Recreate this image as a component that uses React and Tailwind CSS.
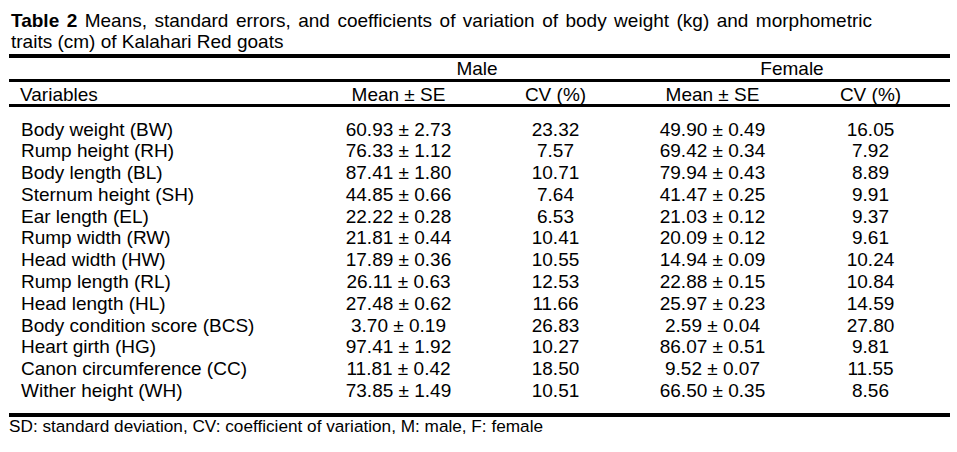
const rows = [
	["Body weight (BW)", "60.93 ± 2.73", "23.32", "49.90 ± 0.49", "16.05"],
	["Rump height (RH)", "76.33 ± 1.12", "7.57", "69.42 ± 0.34", "7.92"],
	["Body length (BL)", "87.41 ± 1.80", "10.71", "79.94 ± 0.43", "8.89"],
	["Sternum height (SH)", "44.85 ± 0.66", "7.64", "41.47 ± 0.25", "9.91"],
	["Ear length (EL)", "22.22 ± 0.28", "6.53", "21.03 ± 0.12", "9.37"],
	["Rump width (RW)", "21.81 ± 0.44", "10.41", "20.09 ± 0.12", "9.61"],
	["Head width (HW)", "17.89 ± 0.36", "10.55", "14.94 ± 0.09", "10.24"],
	["Rump length (RL)", "26.11 ± 0.63", "12.53", "22.88 ± 0.15", "10.84"],
	["Head length (HL)", "27.48 ± 0.62", "11.66", "25.97 ± 0.23", "14.59"],
	["Body condition score (BCS)", "3.70 ± 0.19", "26.83", "2.59 ± 0.04", "27.80"],
	["Heart girth (HG)", "97.41 ± 1.92", "10.27", "86.07 ± 0.51", "9.81"],
	["Canon circumference (CC)", "11.81 ± 0.42", "18.50", "9.52 ± 0.07", "11.55"],
	["Wither height (WH)", "73.85 ± 1.49", "10.51", "66.50 ± 0.35", "8.56"],
];

const cols = "grid grid-cols-[311px_157px_157px_157px_159px]";

export default function App() {
	return (
		<div className="w-[957px] h-[452px] bg-white text-black font-['Liberation_Sans',Arial,sans-serif]">
			<div className="pl-[9px] pt-[10px] w-[950px]">
				{/* caption, justified like the journal's */}
				<p className="ml-[2px] w-[861px] text-justify text-[19px] leading-[21px]">
					<b>Table 2</b> Means, standard errors, and coefficients of variation of body weight (kg) and morphometric traits (cm) of Kalahari Red goats
				</p>

				<div className="mt-[2px] border-t-4 border-black text-[19px]">
					<div className={`${cols} h-[21px] leading-[21px]`}>
						<div />
						<div className="col-span-2 text-center">Male</div>
						<div className="col-span-2 text-center">Female</div>
					</div>
					<div className={`${cols} h-[25px] pt-[3px] leading-[19px] border-t-[3px] border-black`}>
						<div className="pl-[11px]">Variables</div>
						<div className="text-center">Mean ± SE</div>
						<div className="text-center">CV (%)</div>
						<div className="text-center">Mean ± SE</div>
						<div className="text-center">CV (%)</div>
					</div>
					<div className="border-t-[3px] border-black pt-[11.5px] pb-[11px]">
						{rows.map((r) => (
							<div key={r[0]} className={`${cols} leading-[21.8px]`}>
								<div className="pl-[12px]">{r[0]}</div>
								<div className="text-center">{r[1]}</div>
								<div className="text-center">{r[2]}</div>
								<div className="text-center">{r[3]}</div>
								<div className="text-center">{r[4]}</div>
							</div>
						))}
					</div>
					<div className="border-t-4 border-black" />
				</div>

				<p className="text-[17.2px] leading-[19px]">
					SD: standard deviation, CV: coefficient of variation, M: male, F: female
				</p>
			</div>
		</div>
	);
}
